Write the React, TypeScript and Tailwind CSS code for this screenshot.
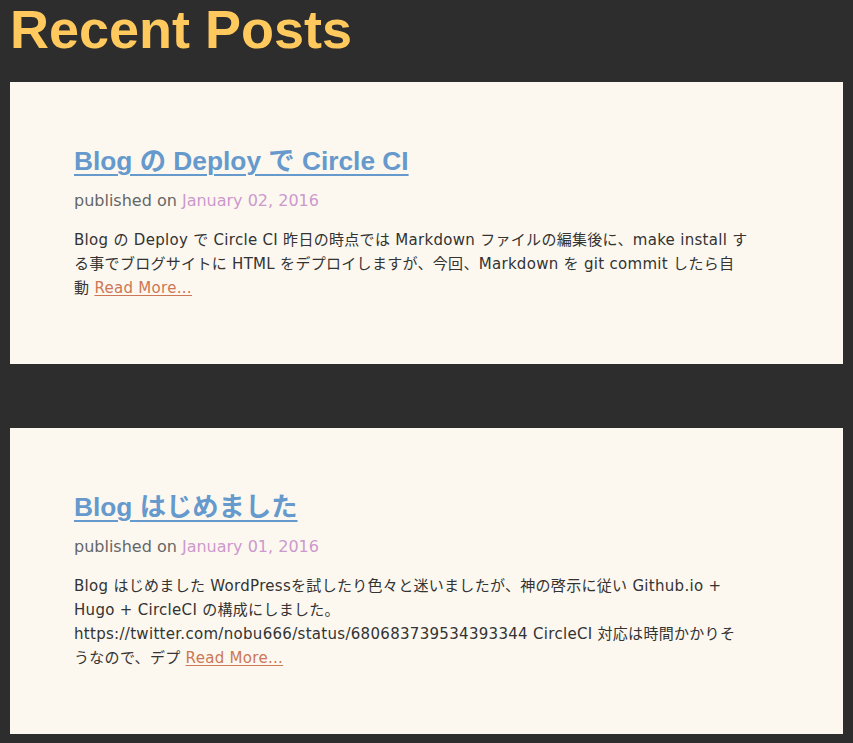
import { FC } from "react";

type Post = {
  title: string;
  date: string;
  summary: string;
};

const posts: Post[] = [
  {
    title: "Blog の Deploy で Circle CI",
    date: "January 02, 2016",
    summary:
      "Blog の Deploy で Circle CI 昨日の時点では Markdown ファイルの編集後に、make install する事でブログサイトに HTML をデプロイしますが、今回、Markdown を git commit したら自動",
  },
  {
    title: "Blog はじめました",
    date: "January 01, 2016",
    summary:
      "Blog はじめました WordPressを試したり色々と迷いましたが、神の啓示に従い Github.io + Hugo + CircleCI の構成にしました。 https://twitter.com/nobu666/status/680683739534393344 CircleCI 対応は時間かかりそうなので、デプ",
  },
];

const PostCard: FC<Post> = ({ title, date, summary }) => {
  return (
    <article className="bg-[#fcf8f0] pl-16 pt-[59px] pb-[64px]">
      <div className="w-[673.7px]">
        {/* Title */}
        <h2 className="font-['Liberation_Sans','Noto_Sans_CJK_JP',sans-serif] text-[26.3px] font-bold leading-[40px]">
          <a href="#" className="text-[#6699cc] underline underline-offset-[4px] decoration-2">
            {title}
          </a>
        </h2>
        <p className="mt-[8px] text-[16px] leading-[24px] text-[#666]">
          published on <span className="text-[#cc99cc]">{date}</span>
        </p>
        {/* Summary */}
        <p className="mt-[15px] text-[15px] tracking-[0.3px] leading-[24px] text-[#333]">
          {summary}{" "}
          <a href="#" className="text-[#cc7755] underline underline-offset-2">
            Read More...
          </a>
        </p>
      </div>
    </article>
  );
};

const App: FC = () => {
  return (
    <div className="min-h-[743px] bg-[#2d2d2d] px-[10px] font-['DejaVu_Sans','Noto_Sans_CJK_JP',sans-serif]">
      <h1 className="font-['Liberation_Sans',sans-serif] text-[54px] font-bold leading-[58px] text-[#ffc95e] pb-[24px]">
        Recent Posts
      </h1>
      <div className="flex flex-col gap-16">
        {posts.map((post) => (
          <PostCard key={post.date} {...post} />
        ))}
      </div>
    </div>
  );
};

export default App;
